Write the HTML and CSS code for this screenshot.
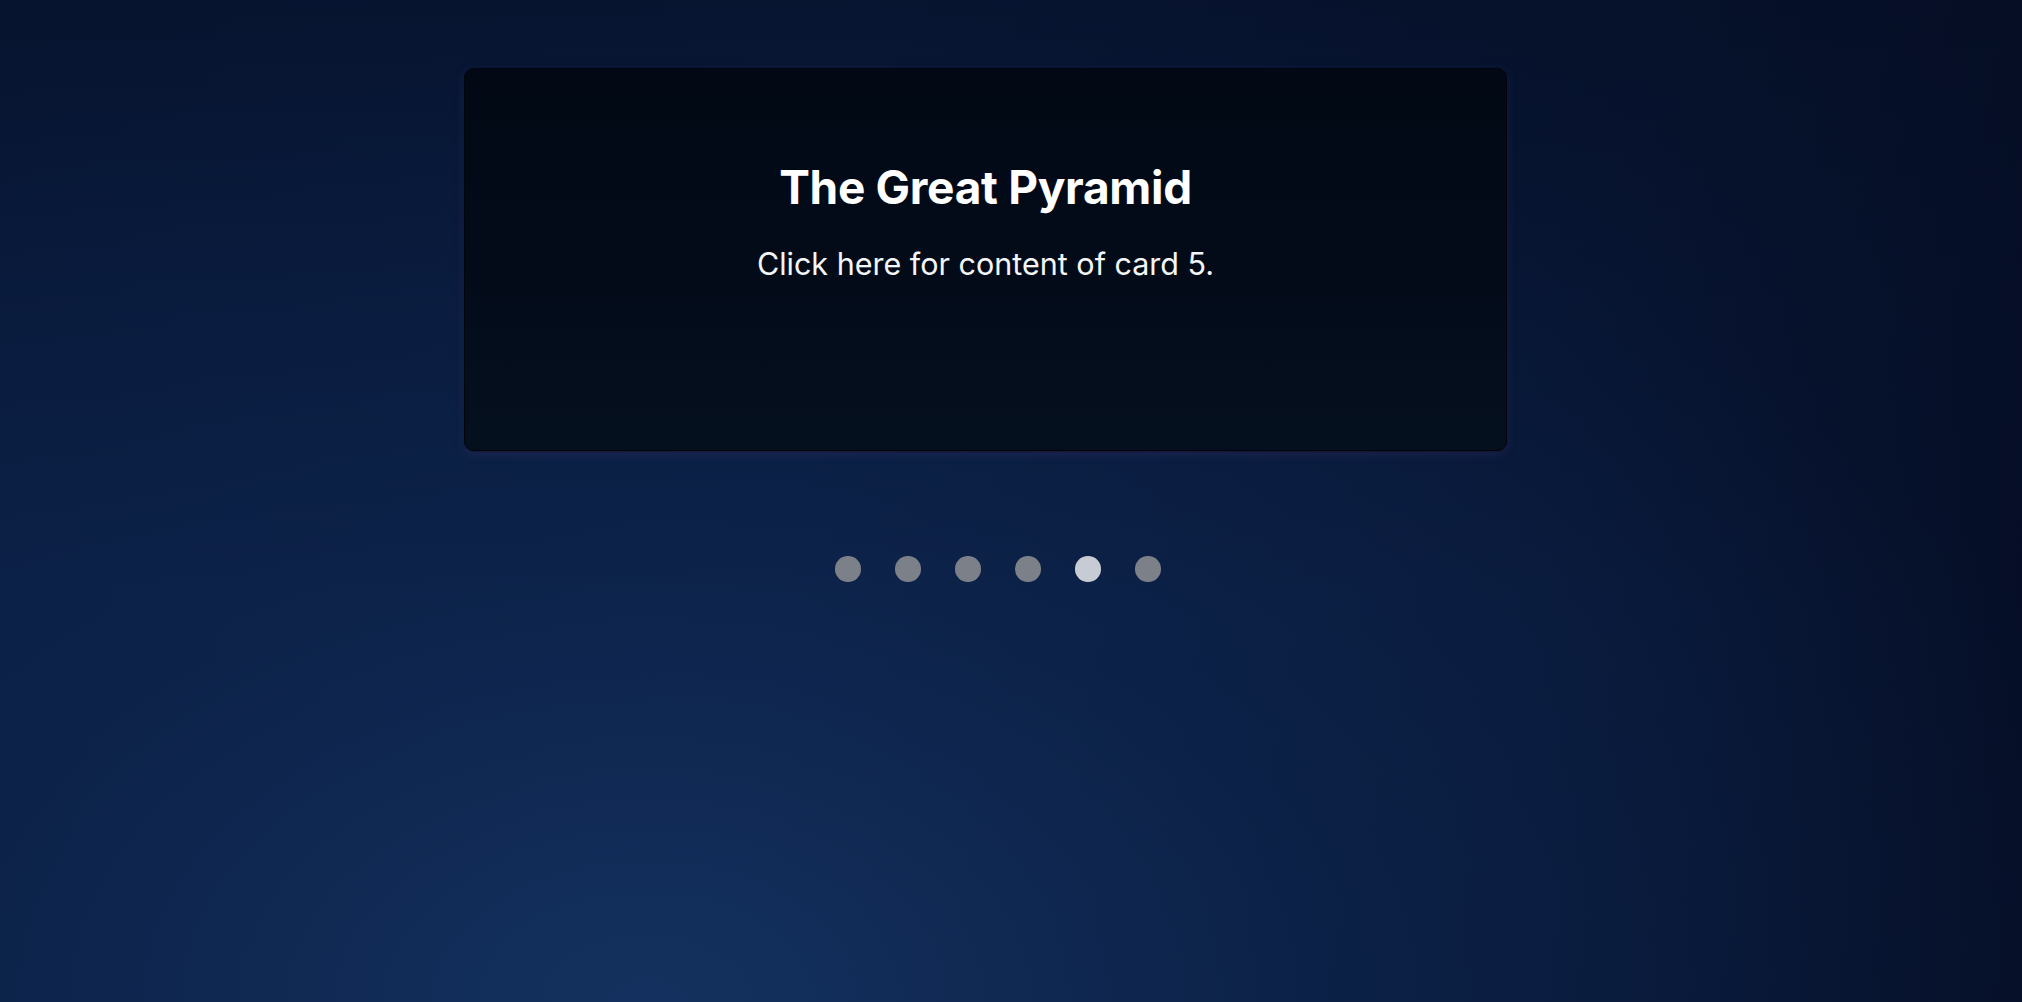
FILE: index.html
```html
<!DOCTYPE html>
<html lang="en">
<head>
<meta charset="utf-8">
<title>Cards</title>
<link rel="stylesheet" href="styles.css">
</head>
<body>
<main class="page">
  <section class="carousel">
    <div class="card">
      <h2 class="card-title">The Great Pyramid</h2>
      <p class="card-text">Click here for content of card 5.</p>
    </div>
    <div class="dots">
      <span class="dot"></span>
      <span class="dot"></span>
      <span class="dot"></span>
      <span class="dot"></span>
      <span class="dot active"></span>
      <span class="dot"></span>
    </div>
  </section>
</main>
</body>
</html>
```

FILE: styles.css
```css
html, body {
  margin: 0;
  padding: 0;
  height: 100%;
}

body {
  font-family: Inter, "Noto Sans", "Liberation Sans", sans-serif;
  color: #fff;
  background-color: #0a1a3a;
  background-image:
    linear-gradient(180deg, rgba(4, 12, 32, 0.55) 0%, rgba(4, 12, 32, 0.2) 30%, rgba(4, 12, 32, 0) 60%),
    radial-gradient(ellipse 75% 95% at 32% 100%, rgba(20, 50, 96, 0.95) 0%, rgba(14, 38, 78, 0.6) 45%, rgba(8, 22, 50, 0) 100%),
    linear-gradient(100deg, #0a1d42 0%, #0b1f46 40%, #081737 75%, #050d24 100%);
  overflow: hidden;
}

.page {
  min-height: 100vh;
  box-sizing: border-box;
  padding: 68px 51px 0 0;
  display: flex;
  flex-direction: column;
  align-items: center;
}

.carousel {
  display: flex;
  flex-direction: column;
  align-items: center;
}

.card {
  width: 1043px;
  height: 383px;
  box-sizing: border-box;
  border: 1px solid #01040a;
  border-radius: 10px;
  background: linear-gradient(180deg, #020915 0%, #030b19 55%, #05101f 100%);
  box-shadow: 0 3px 10px rgba(70, 55, 120, 0.35), 0 1px 2px rgba(0, 0, 0, 0.6);
  padding-top: 90px;
  text-align: center;
}

.card-title {
  margin: 0;
  font-size: 46px;
  font-weight: 700;
  line-height: normal;
  color: #ffffff;
  letter-spacing: -0.3px;
}

.card-text {
  margin: 30px 0 0;
  font-size: 30.5px;
  font-weight: 400;
  line-height: normal;
  color: #f4f5f7;
}

.dots {
  margin-top: 105px;
  padding-left: 25px;
  display: flex;
  gap: 34.4px;
}

.dot {
  width: 25.6px;
  height: 25.6px;
  border-radius: 50%;
  background: #7c8089;
}

.dot.active {
  background: #c7cbd4;
}
```
